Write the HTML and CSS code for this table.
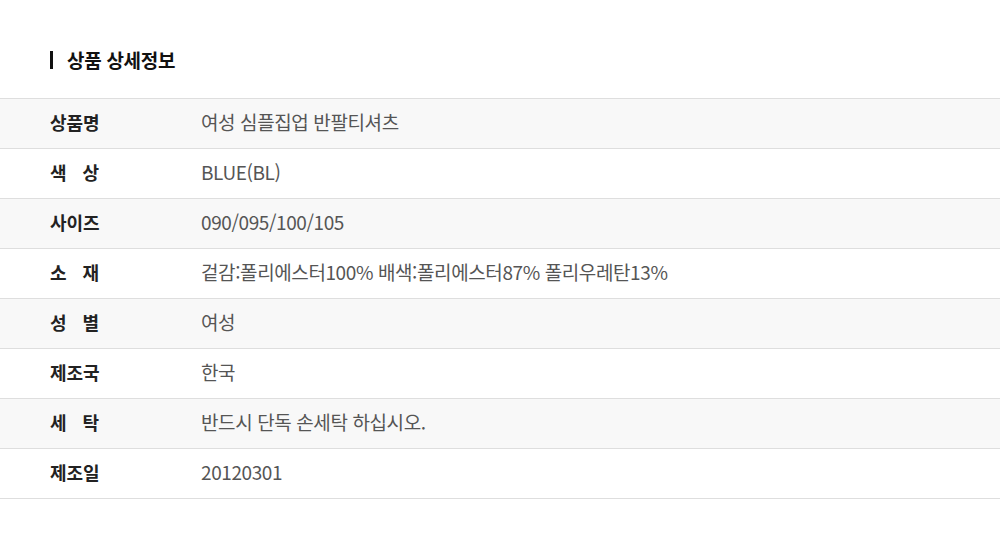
FILE: index.html
```html
<!DOCTYPE html>
<html lang="ko">
<head>
    <meta charset="UTF-8">
    <meta name="viewport" content="width=device-width, initial-scale=1.0">
    <title>상품 상세정보</title>
    <link rel="stylesheet" href="styles.css">
</head>
<body>
    <div class="detail">
        <h2 class="detail-title">상품 상세정보</h2>

        <table class="info-table">
            <tr>
                <th>상품명</th>
                <td>여성 심플집업 반팔티셔츠</td>
            </tr>
            <tr>
                <th><span class="spread">색상</span></th>
                <td>BLUE(BL)</td>
            </tr>
            <tr>
                <th>사이즈</th>
                <td>090/095/100/105</td>
            </tr>
            <tr>
                <th><span class="spread">소재</span></th>
                <td>겉감:폴리에스터100% 배색:폴리에스터87% 폴리우레탄13%</td>
            </tr>
            <tr>
                <th><span class="spread">성별</span></th>
                <td>여성</td>
            </tr>
            <tr>
                <th>제조국</th>
                <td>한국</td>
            </tr>
            <tr>
                <th><span class="spread">세탁</span></th>
                <td>반드시 단독 손세탁 하십시오.</td>
            </tr>
            <tr>
                <th>제조일</th>
                <td>20120301</td>
            </tr>
        </table>
    </div>
</body>
</html>
```

FILE: styles.css
```css
body {
    font-family: 'Noto Sans CJK KR', 'Noto Sans', sans-serif;
    margin: 0;
    padding: 0;
    background: white;
    color: #222;
}
.detail {
    padding-top: 46px;
}
.detail-title {
    display: flex;
    align-items: center;
    gap: 14px;
    margin: 0 0 26px 50px;
    height: 26px;
    font-size: 19px;
    font-weight: 700;
    letter-spacing: -0.3px;
    color: #111;
}
.detail-title::before {
    content: '';
    width: 3px;
    height: 18px;
    margin-top: 2px;
    background: #111;
}
.info-table {
    width: 100%;
    border-collapse: collapse;
    border-top: 1px solid #dedede;
}
.info-table tr {
    height: 50px;
    border-bottom: 1px solid #dedede;
}
.info-table tr:nth-child(odd) {
    background: #f8f8f8;
}
.info-table th,
.info-table td {
    padding: 0 0 4px;
}
.info-table th {
    width: 151px;
    padding-left: 50px;
    text-align: left;
    font-size: 18px;
    font-weight: 700;
    letter-spacing: 0;
    color: #222;
}
.info-table th .spread {
    letter-spacing: 16px;
}
.info-table td {
    font-size: 19px;
    letter-spacing: -0.4px;
    color: #555;
}
```
